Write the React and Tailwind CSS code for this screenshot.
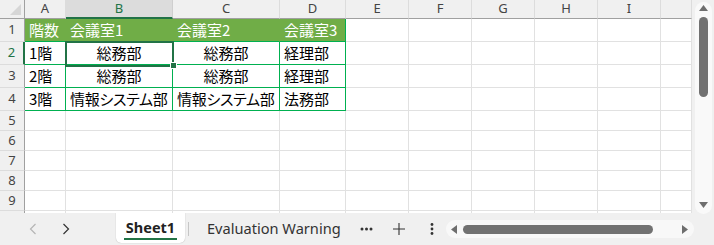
import React from "react";

const colW = [
  "w-[41px]",
  "w-[107px]",
  "w-[107px]",
  "w-[66px]",
  "w-[63px]",
  "w-[63px]",
  "w-[63px]",
  "w-[63px]",
  "w-[63px]",
  "w-[31px]",
];
const letters = ["A", "B", "C", "D", "E", "F", "G", "H", "I", ""];

const jp = "font-['Noto_Sans_CJK_JP','Noto_Sans',sans-serif]";
const ui = "font-['Noto_Sans','Open_Sans',sans-serif]";

const tableRows = [
  [
    { t: "1階" },
    { t: "総務部", c: true },
    { t: "総務部", c: true },
    { t: "経理部" },
  ],
  [
    { t: "2階" },
    { t: "総務部", c: true },
    { t: "総務部", c: true },
    { t: "経理部" },
  ],
  [
    { t: "3階" },
    { t: "情報システム部", p: true },
    { t: "情報システム部", p: true },
    { t: "法務部" },
  ],
];

function RowHeader({ n, h, sel }) {
  return (
    <div
      className={`w-[25px] shrink-0 ${h} flex items-center justify-center bg-[#f0f0f0] border-b border-[#dcdcdc] ${
        sel
          ? "border-r-2 border-r-[#217346] text-[#217346]"
          : "border-r border-r-[#a0a0a0] text-[#444]"
      } ${ui} text-[13px]`}
    >
      {n}
    </div>
  );
}

function EmptyCells({ h, from = 0 }) {
  return colW.slice(from).map((w, i) => (
    <div
      key={i}
      className={`${w} ${h} shrink-0 bg-white border-r border-b border-[#e1e1e1]`}
    />
  ));
}

export default function App() {
  return (
    <div className="w-[714px] h-[245px] bg-[#f0f0f0] overflow-hidden flex flex-col select-none">
      <div className="h-[213px] flex shrink-0">
        {/* grid */}
        <div className="relative w-[692px] h-[213px] overflow-hidden bg-white flex flex-col">
          {/* column header */}
          <div className="flex h-[19px] shrink-0">
            <div className="relative w-[25px] h-[19px] bg-[#f0f0f0] border-r border-b border-[#a0a0a0] shrink-0">
              <div className="absolute right-[3px] bottom-[3px] w-0 h-0 border-l-[11px] border-l-transparent border-b-[11px] border-b-[#d6d6d6]" />
            </div>
            {colW.map((w, i) => (
              <div
                key={i}
                className={`${w} h-[19px] shrink-0 flex items-center justify-center ${ui} text-[13px] ${
                  i === 1
                    ? "bg-[#dcdcdc] text-[#217346] border-b-2 border-b-[#217346] border-r border-r-[#cfcfcf]"
                    : "bg-[#f0f0f0] text-[#444] border-b border-b-[#a0a0a0] border-r border-r-[#dcdcdc]"
                }`}
              >
                {letters[i]}
              </div>
            ))}
          </div>

          {/* row 1 */}
          <div className="flex h-[23px] shrink-0">
            <RowHeader n="1" h="h-[23px]" />
            {["階数", "会議室1", "会議室2", "会議室3"].map((t, i) => (
              <div
                key={i}
                className={`${colW[i]} h-[23px] shrink-0 bg-[#70ad47] text-white ${jp} text-[15px] leading-[22px] pl-[4px] whitespace-nowrap overflow-hidden border-b border-b-[#00b050] ${
                  i === 3 ? "border-r border-r-[#00b050]" : "border-r border-r-[#70ad47]"
                }`}
              >
                {t}
              </div>
            ))}
            <EmptyCells h="h-[23px]" from={4} />
          </div>

          {/* rows 2-4 */}
          {tableRows.map((row, r) => (
            <div key={r} className="flex h-[23px] shrink-0">
              <RowHeader n={String(r + 2)} h="h-[23px]" sel={r === 0} />
              {row.map((cell, i) => (
                <div
                  key={i}
                  className={`${colW[i]} h-[23px] shrink-0 bg-white text-black ${jp} text-[15px] leading-[22px] whitespace-nowrap overflow-hidden border-r border-b border-[#00b050] ${
                    cell.c ? "text-center" : "pl-[4px]"
                  } ${cell.p ? "[font-feature-settings:'palt'] pl-[4px] tracking-[-0.3px]" : ""}`}
                >
                  {cell.t}
                </div>
              ))}
              <EmptyCells h="h-[23px]" from={4} />
            </div>
          ))}

          {/* rows 5-9 */}
          {[5, 6, 7, 8, 9].map((n) => (
            <div key={n} className="flex h-[20px] shrink-0">
              <RowHeader n={String(n)} h="h-[20px]" />
              <EmptyCells h="h-[20px]" />
            </div>
          ))}
          <div className="flex h-[20px] shrink-0">
            <RowHeader n="" h="h-[20px]" />
            <EmptyCells h="h-[20px]" />
          </div>

          {/* selection */}
          <div className="absolute left-[65px] top-[41px] w-[109px] h-[26px] border-2 border-[#217346] pointer-events-none" />
          <div className="absolute left-[170px] top-[62px] w-[7px] h-[7px] bg-[#217346] border border-white" />
        </div>

        {/* vertical scrollbar */}
        <div className="w-[22px] h-[213px] bg-[#f0f0f0] pl-[3px] pt-[2px]">
          <div className="w-[17px] h-[212px] bg-[#f9f9f9] rounded-full flex flex-col items-center">
            <svg width="9" height="6" viewBox="0 0 9 6" className="mt-[3px] mb-[6px] shrink-0">
              <path d="M4.5 0 L9 6 L0 6 Z" fill="#6e6e6e" />
            </svg>
            <div className="w-[9px] h-[80px] bg-[#717171] rounded-full shrink-0" />
            <div className="flex-1" />
            <svg width="9" height="6" viewBox="0 0 9 6" className="mb-[6px] shrink-0">
              <path d="M0 0 L9 0 L4.5 6 Z" fill="#6e6e6e" />
            </svg>
          </div>
        </div>
      </div>

      {/* bottom tab bar */}
      <div className={`h-[32px] flex items-center ${ui} shrink-0`}>
        <div className="w-[116px] h-full flex items-center shrink-0">
          <svg width="8" height="12" viewBox="0 0 8 12" className="ml-[29px]">
            <path d="M6.5 1 L1.5 6 L6.5 11" stroke="#b5b5b5" strokeWidth="1.2" fill="none" />
          </svg>
          <svg width="8" height="12" viewBox="0 0 8 12" className="ml-[25px]">
            <path d="M1.5 1 L6.5 6 L1.5 11" stroke="#333" strokeWidth="1.2" fill="none" />
          </svg>
        </div>
        <div className="w-[69px] h-[30px] self-start bg-white rounded-b-[5px] shadow-[0_0_1px_rgba(0,0,0,0.35)] flex flex-col items-center justify-center shrink-0">
          <div className="text-[14.5px] font-bold text-[#222] leading-[18px] mt-[2px]">Sheet1</div>
          <div className="w-[53px] h-[2px] bg-[#217346] mt-[2px]" />
        </div>
        <div className="w-px h-[14px] bg-[#c6c6c6] ml-[3px] shrink-0" />
        <div className="ml-[18px] text-[14.6px] text-[#333] whitespace-nowrap shrink-0 w-[134px]">
          Evaluation Warning
        </div>
        <svg width="13" height="4" viewBox="0 0 13 4" className="ml-[19px] shrink-0">
          <circle cx="2" cy="2" r="1.5" fill="#333" />
          <circle cx="6.5" cy="2" r="1.5" fill="#333" />
          <circle cx="11" cy="2" r="1.5" fill="#333" />
        </svg>
        <svg width="12" height="12" viewBox="0 0 12 12" className="ml-[20px] shrink-0">
          <path d="M6 0 V12 M0 6 H12" stroke="#333" strokeWidth="1.1" />
        </svg>
        <svg width="4" height="12" viewBox="0 0 4 12" className="ml-[25px] shrink-0">
          <circle cx="2" cy="1.5" r="1.4" fill="#333" />
          <circle cx="2" cy="6" r="1.4" fill="#333" />
          <circle cx="2" cy="10.5" r="1.4" fill="#333" />
        </svg>
        <div className="ml-[12px] w-[248px] h-[18px] bg-[#f8f8f8] rounded-full flex items-center shrink-0">
          <svg width="6" height="9" viewBox="0 0 6 9" className="ml-[5px] shrink-0">
            <path d="M6 0 L6 9 L0 4.5 Z" fill="#6e6e6e" />
          </svg>
          <div className="ml-[6px] w-[190px] h-[9px] bg-[#717171] rounded-full shrink-0" />
          <div className="flex-1" />
          <svg width="6" height="9" viewBox="0 0 6 9" className="mr-[6px] shrink-0">
            <path d="M0 0 L6 4.5 L0 9 Z" fill="#6e6e6e" />
          </svg>
        </div>
      </div>
    </div>
  );
}
